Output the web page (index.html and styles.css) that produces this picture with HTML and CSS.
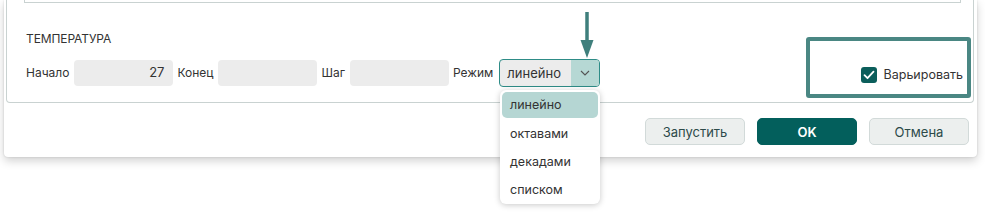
FILE: index.html
```html
<!DOCTYPE html>
<html lang="ru">
<head>
<meta charset="utf-8">
<link rel="stylesheet" href="styles.css">
</head>
<body>
<div class="dialog">
  <div class="panel">
    <div class="topbox"></div>
    <div class="title">ТЕМПЕРАТУРА</div>
    <div class="row">
      <span class="lbl">Начало</span>
      <div class="inp">27</div>
      <span class="lbl">Конец</span>
      <div class="inp"></div>
      <span class="lbl">Шаг</span>
      <div class="inp"></div>
      <span class="lbl">Режим</span>
      <div class="select">
        <span class="sel-val">линейно</span>
        <span class="sel-btn">
          <svg width="10" height="6" viewBox="0 0 10 6"><path d="M1 1l4 4 4-4" fill="none" stroke="#555" stroke-width="1.1"/></svg>
        </span>
      </div>
      <label class="check">
        <span class="box"><svg width="12" height="10" viewBox="0 0 12 10"><path d="M1.5 5.2l3 3 6-6.5" fill="none" stroke="#fff" stroke-width="1.8" stroke-linecap="round" stroke-linejoin="round"/></svg></span>
        <span>Варьировать</span>
      </label>
    </div>
  </div>
  <div class="buttons">
    <button class="btn">Запустить</button>
    <button class="btn primary">OK</button>
    <button class="btn">Отмена</button>
  </div>
</div>
<div class="annot-box"></div>
<svg class="annot-arrow" width="14" height="46" viewBox="0 0 14 46"><path d="M7 0v30" stroke="#3f7f7c" stroke-width="3.5"/><path d="M0.5 28h13L7 46z" fill="#3f7f7c"/></svg>
<ul class="menu">
  <li class="active">линейно</li>
  <li>октавами</li>
  <li>декадами</li>
  <li>списком</li>
</ul>
</body>
</html>
```
FILE: styles.css
```css
* { box-sizing: border-box; }
html, body { margin: 0; padding: 0; }
body {
  width: 985px; height: 217px; overflow: hidden;
  background: #fff;
  font-family: Inter, "Noto Sans", sans-serif;
  color: #333;
  font-size: 12px;
  position: relative;
}
.dialog {
  margin-left: 4px;
  width: 973px;
  height: 157px;
  background: #fff;
  padding: 0 3px 0 2px;
  border-radius: 0 0 4px 4px;
  box-shadow: 0 4px 10px rgba(0,0,0,0.18), 0 0 2px rgba(0,0,0,0.15);
}
.panel {
  height: 103px;
  border: 1px solid #c9d2d1;
  border-top: none;
  border-radius: 0 0 4px 4px;
  padding: 0 10px 0 19px;
}
.topbox {
  margin-left: -2px;
  width: 937px;
  height: 3px;
  border: 1px solid #c9d2d1;
  border-top: none;
}
.title {
  margin-top: 29px;
  font-size: 12px;
  line-height: 14px;
  letter-spacing: -0.1px;
  color: #333;
}
.row {
  margin-top: 13px;
  display: flex;
  align-items: center;
  height: 28px;
}
.lbl { margin: 0 5px 0 0; line-height: 16px; }
.inp {
  width: 99px; height: 26px;
  background: #ececec;
  border-radius: 4px;
  text-align: right;
  padding: 0 9px;
  line-height: 24px;
  margin-right: 4px;
  font-size: 13px;
}
.select {
  margin-left: 1px;
  width: 101px; height: 28px;
  border: 1px solid #2e8c87;
  border-radius: 4px;
  display: flex;
  overflow: hidden;
  background: #ececec;
}
.sel-val { flex: 1; padding-left: 7px; line-height: 26px; font-size: 13px; }
.sel-btn {
  width: 28px; background: #b6d8d4;
  display: flex; align-items: center; justify-content: center;
}
.check {
  margin-left: auto;
  margin-top: 3px;
  display: flex; align-items: center; gap: 7px;
  font-size: 12.5px;
}
.box {
  width: 16px; height: 16px; border-radius: 3px;
  background: #0b5e5b;
  display: flex; align-items: center; justify-content: center;
}
.buttons {
  display: flex;
  justify-content: flex-end;
  gap: 12px;
  padding: 15px 5px 0 0;
}
.btn {
  width: 100px; height: 27px;
  font: inherit; font-size: 13px;
  color: #2c4a49;
  background: #ecefee;
  border: 1px solid #d2dad9;
  border-radius: 5px;
}
.btn.primary {
  background: #035f5c; border-color: #035f5c;
  color: #fff; font-weight: 600;
}
.annot-box {
  position: absolute; left: 806px; top: 37px;
  width: 165px; height: 61px;
  border: 4px solid #4a8783; border-radius: 3px;
}
.annot-arrow { position: absolute; left: 580px; top: 12px; }
.menu {
  position: absolute; left: 500px; top: 90px;
  width: 100px; height: 114px;
  margin: 0; padding: 2px;
  list-style: none;
  background: #fff;
  border-radius: 6px;
  box-shadow: 0 1px 6px rgba(0,0,0,0.22);
}
.menu li {
  height: 28px; line-height: 28px;
  padding-left: 8px;
  border-radius: 5px;
  font-size: 12.5px;
}
.menu li.active { background: #b5d6d3; height: 26px; line-height: 26px; margin-bottom: 2px; }
```
